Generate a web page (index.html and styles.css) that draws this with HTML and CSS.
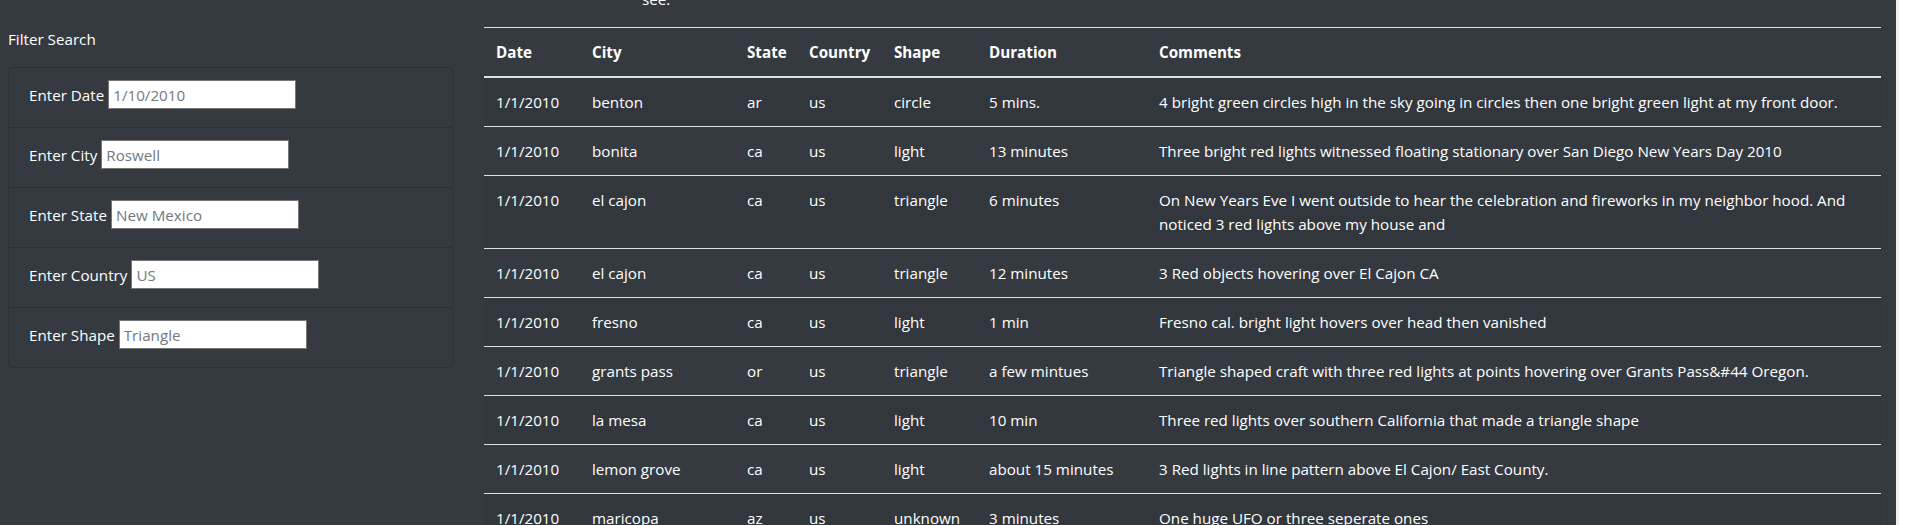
FILE: index.html
```html
<!DOCTYPE html>
<html lang="en">
<head>
<meta charset="utf-8">
<title>UFO Sightings</title>
<link rel="stylesheet" href="styles.css">
</head>
<body>
<div class="page">
  <aside class="sidebar">
    <div class="filter-title">Filter Search</div>
    <ul class="filters">
      <li class="filter-item"><label for="datetime">Enter Date</label><input id="datetime" type="text" placeholder="1/10/2010"></li>
      <li class="filter-item"><label for="city">Enter City</label><input id="city" type="text" placeholder="Roswell"></li>
      <li class="filter-item"><label for="state">Enter State</label><input id="state" type="text" placeholder="New Mexico"></li>
      <li class="filter-item"><label for="country">Enter Country</label><input id="country" type="text" placeholder="US"></li>
      <li class="filter-item"><label for="shape">Enter Shape</label><input id="shape" type="text" placeholder="Triangle"></li>
    </ul>
  </aside>
  <main class="main">
    <p class="intro">see.</p>
    <table class="ufo-table">
      <colgroup>
        <col class="c-date"><col class="c-city"><col class="c-state"><col class="c-country"><col class="c-shape"><col class="c-duration"><col class="c-comments">
      </colgroup>
      <thead>
        <tr><th>Date</th><th>City</th><th>State</th><th>Country</th><th>Shape</th><th>Duration</th><th>Comments</th></tr>
      </thead>
      <tbody>
        <tr><td>1/1/2010</td><td>benton</td><td>ar</td><td>us</td><td>circle</td><td>5 mins.</td><td>4 bright green circles high in the sky going in circles then one bright green light at my front door.</td></tr>
        <tr><td>1/1/2010</td><td>bonita</td><td>ca</td><td>us</td><td>light</td><td>13 minutes</td><td>Three bright red lights witnessed floating stationary over San Diego New Years Day 2010</td></tr>
        <tr><td>1/1/2010</td><td>el cajon</td><td>ca</td><td>us</td><td>triangle</td><td>6 minutes</td><td>On New Years Eve I went outside to hear the celebration and fireworks in my neighbor hood. And noticed 3 red lights above my house and</td></tr>
        <tr><td>1/1/2010</td><td>el cajon</td><td>ca</td><td>us</td><td>triangle</td><td>12 minutes</td><td>3 Red objects hovering over El Cajon CA</td></tr>
        <tr><td>1/1/2010</td><td>fresno</td><td>ca</td><td>us</td><td>light</td><td>1 min</td><td>Fresno cal. bright light hovers over head then vanished</td></tr>
        <tr><td>1/1/2010</td><td>grants pass</td><td>or</td><td>us</td><td>triangle</td><td>a few mintues</td><td>Triangle shaped craft with three red lights at points hovering over Grants Pass&amp;#44 Oregon.</td></tr>
        <tr><td>1/1/2010</td><td>la mesa</td><td>ca</td><td>us</td><td>light</td><td>10 min</td><td>Three red lights over southern California that made a triangle shape</td></tr>
        <tr><td>1/1/2010</td><td>lemon grove</td><td>ca</td><td>us</td><td>light</td><td>about 15 minutes</td><td>3 Red lights in line pattern above El Cajon/ East County.</td></tr>
        <tr><td>1/1/2010</td><td>maricopa</td><td>az</td><td>us</td><td>unknown</td><td>3 minutes</td><td>One huge UFO or three seperate ones</td></tr>
      </tbody>
    </table>
  </main>
</div>
</body>
</html>
```
FILE: styles.css
```css
* { box-sizing: border-box; }

html, body {
  margin: 0;
  height: 100%;
}

body {
  background: #ffffff;
  font-family: "Open Sans", "Noto Sans", sans-serif;
  font-size: 15.2px;
  line-height: 24px;
  color: #ffffff;
  overflow: hidden;
}

.page {
  display: flex;
  align-items: flex-start;
  width: 1899px;
  height: 525px;
  background: #343a40;
  border-right: 3px solid #efefef;
  overflow: hidden;
}

/* ---------- sidebar ---------- */
.sidebar {
  flex: 0 0 469px;
  padding: 27px 16px 0 8px;
}

.filter-title {
  margin-bottom: 16px;
}

.filters {
  list-style: none;
  margin: 0;
  padding: 0;
  border: 1px solid rgba(0, 0, 0, 0.14);
  border-radius: 4px;
}

.filter-item {
  display: flex;
  align-items: baseline;
  gap: 4px;
  height: 60px;
  padding: 12px 20px 0;
  border-top: 1px solid rgba(0, 0, 0, 0.14);
}

.filter-item:first-child {
  height: 59px;
  border-top: none;
}

.filter-item label {
  color: #ffffff;
}

.filter-item input {
  width: 188px;
  height: 29px;
  padding: 0 4px;
  border: 1px solid #767676;
  border-radius: 0;
  background: #ffffff;
  font-family: inherit;
  font-size: 15.2px;
  color: #212529;
}

.filter-item input::placeholder {
  color: #737882;
  opacity: 1;
}

/* ---------- main ---------- */
.main {
  flex: 1 1 auto;
  min-width: 0;
  padding: 0 15px;
}

.intro {
  margin: -13px 0 16px;
  padding-left: 158px;
}

.ufo-table {
  width: 100%;
  border-collapse: collapse;
  table-layout: fixed;
  color: #ffffff;
}

.c-date { width: 96px; }
.c-city { width: 155px; }
.c-state { width: 62px; }
.c-country { width: 85px; }
.c-shape { width: 95px; }
.c-duration { width: 170px; }

.ufo-table th,
.ufo-table td {
  padding: 12px;
  text-align: left;
  vertical-align: top;
  border-top: 1px solid #dee2e6;
}

.ufo-table th {
  font-weight: 700;
  vertical-align: bottom;
  border-bottom: 2px solid #dee2e6;
}

.ufo-table tbody tr:nth-child(odd) {
  background: rgba(0, 0, 0, 0.05);
}
```
